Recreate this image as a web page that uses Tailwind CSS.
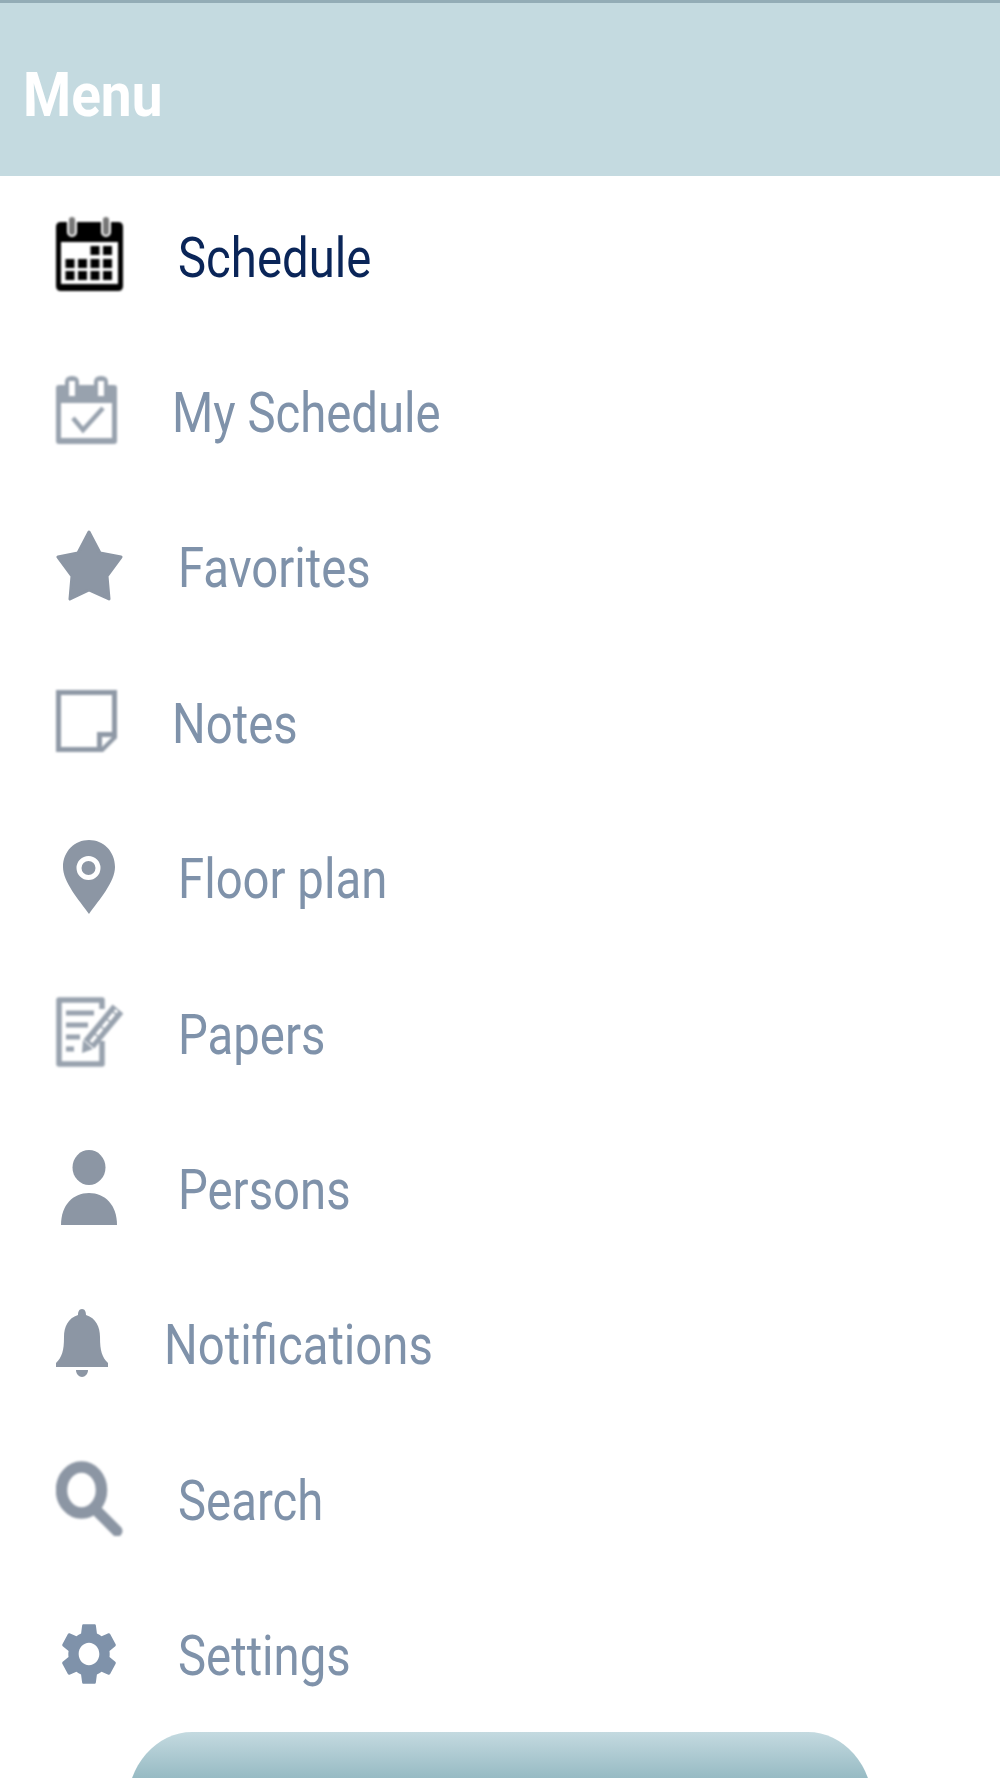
<!DOCTYPE html>
<html lang="en">
<head>
<meta charset="utf-8">
<script src="https://cdn.jsdelivr.net/npm/@tailwindcss/browser@4"></script>
<title>Menu</title>
</head>
<body class="bg-white">
<div class="w-[1000px] h-[1778px] overflow-hidden flex flex-col bg-white font-['Roboto',sans-serif]">
  <header class="h-[176px] shrink-0 bg-[#c4dae0] border-t-[3px] border-[#93acb6] flex items-center pl-[23px] pt-[11px]">
    <h1 class="text-[55px] leading-none font-bold text-white scale-y-[1.12] blur-[0.5px]">Menu</h1>
  </header>
  <nav class="shrink-0 flex flex-col pt-[1.5px] text-[47.3px] leading-none text-[#7f92aa]">
    <a class="h-[155.4px] flex items-center pl-[56px]">
      <svg class="w-[67px] h-[75px] shrink-0 mb-[3px] blur-[0.8px]" viewBox="0 0 67 75">
        <path fill="#000" d="M5 6H62Q67 6 67 11V70Q67 75 62 75H5Q0 75 0 70V11Q0 6 5 6Z"/>
        <rect x="5" y="26" width="57" height="42" fill="#fff"/>
        <rect x="12" y="0" width="8" height="20" rx="4" fill="#777" stroke="#fff" stroke-width="2"/>
        <rect x="46" y="0" width="8" height="20" rx="4" fill="#777" stroke="#fff" stroke-width="2"/>
        <g fill="#000">
          <rect x="34.5" y="30" width="9" height="9"/><rect x="47" y="30" width="9" height="9"/>
          <rect x="9.5" y="43" width="9" height="9"/><rect x="22" y="43" width="9" height="9"/><rect x="34.5" y="43" width="9" height="9"/><rect x="47" y="43" width="9" height="9"/>
          <rect x="9.5" y="55" width="9" height="9"/><rect x="22" y="55" width="9" height="9"/><rect x="34.5" y="55" width="9" height="9"/><rect x="47" y="55" width="9" height="9"/>
        </g>
      </svg>
      <span class="ml-[55px] mt-[8px] text-[#0a2558] scale-y-[1.16] blur-[0.4px]">Schedule</span>
    </a>
    <a class="h-[155.4px] flex items-center pl-[56px]">
      <svg class="w-[61px] h-[68px] shrink-0 mb-[2px] blur-[1px]" viewBox="0 0 61 68">
        <path fill="#98a2ae" fill-rule="evenodd" d="M3 9H9V6Q9 0 16 0Q23 0 23 6V9H38V6Q38 0 45 0Q52 0 52 6V9H58Q61 9 61 12V65Q61 68 58 68H3Q0 68 0 65V12Q0 9 3 9ZM13 5V20H19V5ZM42 5V20H48V5ZM5 27V62H56V27Z"/>
        <path fill="none" stroke="#98a2ae" stroke-width="4.5" d="M17 42L27 54L47 32"/>
      </svg>
      <span class="ml-[55px] mt-[8px] scale-y-[1.16] blur-[0.4px]">My Schedule</span>
    </a>
    <a class="h-[155.4px] flex items-center pl-[56px]">
      <svg class="w-[67px] h-[72px] shrink-0 blur-[0.7px]" viewBox="0 0 67 72">
        <path fill="#8c96a4" stroke="#8c96a4" stroke-width="3" stroke-linejoin="round" d="M33 2L44 23L65 27L51 46L53 69L33 60L14 69L16 46L2 27L22 23Z"/>
      </svg>
      <span class="ml-[55px] mt-[8px] scale-y-[1.16] blur-[0.4px]">Favorites</span>
    </a>
    <a class="h-[155.4px] flex items-center pl-[56px]">
      <svg class="w-[61px] h-[62px] shrink-0 blur-[0.9px]" viewBox="0 0 61 62">
        <path fill="#8f99a6" fill-rule="evenodd" d="M0 0H61V48L47 62H0ZM5 5V57H41V42H56V5ZM46 47V57L56 47Z"/>
      </svg>
      <span class="ml-[55px] mt-[8px] scale-y-[1.16] blur-[0.4px]">Notes</span>
    </a>
    <a class="h-[155.4px] flex items-center pl-[63px]">
      <svg class="w-[52px] h-[74px] shrink-0 blur-[0.7px]" viewBox="0 0 52 74">
        <path fill="#8c96a4" d="M26 0C12 0 0 11 0 27C0 42 16 60 26 74C36 60 52 42 52 27C52 11 40 0 26 0Z"/>
        <circle cx="25.5" cy="28" r="9.5" fill="#8c96a4" stroke="#fff" stroke-width="5"/>
      </svg>
      <span class="ml-[63px] mt-[8px] scale-y-[1.16] blur-[0.4px]">Floor plan</span>
    </a>
    <a class="h-[155.4px] flex items-center pl-[56px]">
      <svg class="w-[67px] h-[70px] shrink-0 blur-[1px]" viewBox="0 0 67 70">
        <path fill="none" stroke="#98a2ae" stroke-width="5.5" stroke-linejoin="round" d="M46 12V3H3V67H46V44"/>
        <g stroke="#98a2ae" stroke-width="5" fill="none">
          <path d="M10 16H38M10 28H32M10 40H24M10 52H18"/>
          <path stroke-width="14" d="M33 47L62 12"/>
        </g>
        <path stroke="#fff" stroke-width="3.5" stroke-dasharray="8 1.5" fill="none" d="M35 45L61 13"/>
        <path fill="#98a2ae" d="M26 56L27 43L37 52Z"/>
      </svg>
      <span class="ml-[55px] mt-[8px] scale-y-[1.16] blur-[0.4px]">Papers</span>
    </a>
    <a class="h-[155.4px] flex items-center pl-[61px]">
      <svg class="w-[56px] h-[75px] shrink-0 blur-[0.5px]" viewBox="0 0 56 75">
        <ellipse cx="28" cy="17.5" rx="16.5" ry="17.5" fill="#8c96a4"/>
        <path fill="#8c96a4" d="M0 75C0 55 12 43 28 43C44 43 56 55 56 75Z"/>
      </svg>
      <span class="ml-[61px] mt-[8px] scale-y-[1.16] blur-[0.4px]">Persons</span>
    </a>
    <a class="h-[155.4px] flex items-center pl-[56px]">
      <svg class="w-[52px] h-[68px] shrink-0 blur-[0.7px]" viewBox="0 0 52 68">
        <path fill="#8c96a4" d="M26 0C29 0 30 3 30 6C40 9 44 18 44 28C44 42 46 48 52 54V58H0V54C6 48 8 42 8 28C8 18 12 9 22 6C22 3 23 0 26 0Z"/>
        <path fill="#8c96a4" d="M20 61H32C32 65 29 68 26 68S20 65 20 61Z"/>
      </svg>
      <span class="ml-[56px] mt-[8px] scale-y-[1.16] blur-[0.4px]">Notifications</span>
    </a>
    <a class="h-[155.4px] flex items-center pl-[56px]">
      <svg class="w-[67px] h-[75px] shrink-0 blur-[1px]" viewBox="0 0 67 75">
        <ellipse cx="25.5" cy="29" rx="20" ry="23" fill="none" stroke="#8c96a4" stroke-width="11.5"/>
        <path stroke="#8c96a4" stroke-width="11" stroke-linecap="round" d="M40 49L61 70"/>
      </svg>
      <span class="ml-[55px] mt-[8px] scale-y-[1.16] blur-[0.4px]">Search</span>
    </a>
    <a class="h-[155.4px] flex items-center pl-[62px]">
      <svg class="w-[54px] h-[62px] shrink-0 blur-[0.3px]" viewBox="2.6 2 18.8 20" preserveAspectRatio="none">
        <path fill="#7f92aa" fill-rule="evenodd" d="M19.14 12.94c.04-.3.06-.61.06-.94 0-.32-.02-.64-.07-.94l2.03-1.58c.18-.14.23-.41.12-.61l-1.92-3.32c-.12-.22-.37-.29-.59-.22l-2.39.96c-.5-.38-1.03-.7-1.62-.94l-.36-2.54c-.04-.24-.24-.41-.48-.41h-3.84c-.24 0-.43.17-.47.41l-.36 2.54c-.59.24-1.13.57-1.62.94l-2.39-.96c-.22-.08-.47 0-.59.22L2.74 8.87c-.12.21-.08.47.12.61l2.03 1.58c-.05.3-.09.63-.09.94s.02.64.07.94l-2.03 1.58c-.18.14-.23.41-.12.61l1.92 3.32c.12.22.37.29.59.22l2.39-.96c.5.38 1.03.7 1.62.94l.36 2.54c.05.24.24.41.48.41h3.84c.24 0 .44-.17.47-.41l.36-2.54c.59-.24 1.13-.56 1.62-.94l2.39.96c.22.08.47 0 .59-.22l1.92-3.32c.12-.22.07-.47-.12-.61l-2.01-1.58zM12 15.6c-1.98 0-3.6-1.62-3.6-3.6s1.62-3.6 3.6-3.6 3.6 1.62 3.6 3.6-1.62 3.6-3.6 3.6z"/>
      </svg>
      <span class="ml-[62px] mt-[8px] scale-y-[1.16] blur-[0.4px]">Settings</span>
    </a>
  </nav>
  <div class="mx-auto mt-[1px] w-[746px] h-[90px] shrink-0 rounded-t-[65px_75px] bg-linear-to-b from-[#c4dae0] to-[#96bac3] to-[52%]"></div>
</div>
</body>
</html>
